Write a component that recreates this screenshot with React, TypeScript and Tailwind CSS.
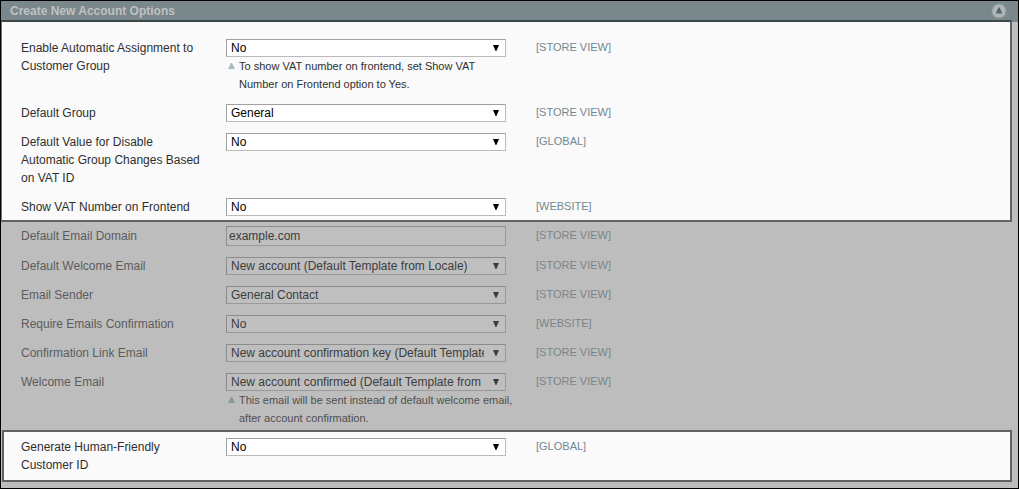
import React, { useState } from "react";

type Field = {
  id: string;
  label: string;
  value: string;
  options?: string[];
  note?: string;
  scope: "STORE VIEW" | "GLOBAL" | "WEBSITE";
};

const yesNo = ["No", "Yes"];

const vatFields: Field[] = [
  {
    id: "auto-assignment",
    label: "Enable Automatic Assignment to Customer Group",
    value: "No",
    options: yesNo,
    note: "To show VAT number on frontend, set Show VAT Number on Frontend option to Yes.",
    scope: "STORE VIEW",
  },
  { id: "default-group", label: "Default Group", value: "General", options: ["General", "Wholesale"], scope: "STORE VIEW" },
  {
    id: "disable-group-change",
    label: "Default Value for Disable Automatic Group Changes Based on VAT ID",
    value: "No",
    options: yesNo,
    scope: "GLOBAL",
  },
  { id: "show-vat", label: "Show VAT Number on Frontend", value: "No", options: yesNo, scope: "WEBSITE" },
];

const emailFields: Field[] = [
  { id: "email-domain", label: "Default Email Domain", value: "example.com", scope: "STORE VIEW" },
  {
    id: "welcome-template",
    label: "Default Welcome Email",
    value: "New account (Default Template from Locale)",
    options: ["New account (Default Template from Locale)"],
    scope: "STORE VIEW",
  },
  { id: "email-sender", label: "Email Sender", value: "General Contact", options: ["General Contact"], scope: "STORE VIEW" },
  { id: "require-confirmation", label: "Require Emails Confirmation", value: "No", options: yesNo, scope: "WEBSITE" },
  {
    id: "confirmation-link",
    label: "Confirmation Link Email",
    value: "New account confirmation key (Default Template from Locale)",
    options: ["New account confirmation key (Default Template from Locale)"],
    scope: "STORE VIEW",
  },
  {
    id: "welcome-email",
    label: "Welcome Email",
    value: "New account confirmed (Default Template from Locale)",
    options: ["New account confirmed (Default Template from Locale)"],
    note: "This email will be sent instead of default welcome email, after account confirmation.",
    scope: "STORE VIEW",
  },
];

const customerIdFields: Field[] = [
  { id: "human-friendly-id", label: "Generate Human-Friendly Customer ID", value: "No", options: yesNo, scope: "GLOBAL" },
];

function FieldRow({ field, dimmed = false }: { field: Field; dimmed?: boolean }) {
  const control = dimmed
    ? "border-t-[#8c8c8c] border-l-[#8c8c8c] border-r-[#999] border-b-[#999] bg-[#bfbfbf] text-[#3c3c3c]"
    : "border-t-[#a0a0a0] border-l-[#a0a0a0] border-r-[#bbb] border-b-[#bbb] bg-white text-black";
  return (
    <div className="grid grid-cols-[185px_280px_1fr] items-start gap-x-5">
      <label
        htmlFor={field.id}
        className={`text-[12px] leading-[18px] ${dimmed ? "text-[#5c5c5c]" : "text-[#2f2f2f]"}`}
      >
        {field.label}
      </label>
      <div>
        {field.options ? (
          <div className="relative flex">
            <select
              id={field.id}
              defaultValue={field.value}
              className={`h-[18px] w-full appearance-none rounded-none border pr-[21px] pl-1 text-[12px] leading-4 outline-none ${control}`}
            >
              {field.options.map((option) => (
                <option key={option}>{option}</option>
              ))}
            </select>
            <svg
              viewBox="0 0 6 6"
              aria-hidden="true"
              className={`pointer-events-none absolute top-1.5 right-[7px] size-1.5 ${dimmed ? "fill-[#3c3c3c]" : "fill-black"}`}
            >
              <path d="M0 0H6L3.4 6H2.6Z" />
            </svg>
          </div>
        ) : (
          <input
            id={field.id}
            type="text"
            defaultValue={field.value}
            className={`-mt-px block h-5 w-full rounded-none border px-0.5 text-[12px] leading-4 outline-none ${control}`}
          />
        )}
        {field.note && (
          <p className={`-mr-2 flex gap-1 pl-0.5 text-[11px] leading-[18px] ${dimmed ? "text-[#4f4f4f]" : "text-[#2f2f2f]"}`}>
            <svg
              viewBox="0 0 7 6"
              aria-hidden="true"
              className={`mt-1.5 h-1.5 w-[7px] shrink-0 ${dimmed ? "fill-[#87969b]" : "fill-[#a9bcc2]"}`}
            >
              <path d="M3 0H4L7 6H0Z" />
            </svg>
            <span>{field.note}</span>
          </p>
        )}
      </div>
      <span className={`pl-2.5 text-[11px] leading-4 ${dimmed ? "text-[#7b8588]" : "text-[#6f8992]"}`}>
        [{field.scope}]
      </span>
    </div>
  );
}

export default function App() {
  const [open, setOpen] = useState(true);
  return (
    <section className="border border-black bg-[#bdbdbd] font-['Liberation_Sans',Arial,sans-serif]">
      <header className="flex h-[21px] items-start justify-between bg-[#7a878b] pr-[11px] pl-[9px]">
        <h2 className="text-[12px] leading-5 font-bold text-[#bfc1c2]">Create New Account Options</h2>
        <button
          type="button"
          aria-label="Toggle section"
          aria-expanded={open}
          onClick={() => setOpen(!open)}
          className="pt-0.5"
        >
          <svg viewBox="0 0 16 16" className="block size-4" aria-hidden="true">
            <circle cx="8" cy="8" r="7.6" fill="#8d989b" />
            <circle cx="8" cy="8" r="6.6" fill="#b0b5b7" />
            <path d="M7.4 4.6H8.6L11.3 10.4H4.7Z" fill="#4d6873" />
          </svg>
        </button>
      </header>
      {open && (
        <>
          <div className="relative -mt-0.5 mr-1.5 flex flex-col gap-[11px] border-y-2 border-r-2 border-l border-t-[#3d484c] border-r-[#626364] border-b-[#626364] border-l-[#777] bg-[#fafafa] pt-[17px] pb-1 pl-[19px]">
            {vatFields.map((field) => (
              <FieldRow key={field.id} field={field} />
            ))}
          </div>
          <div className="flex flex-col gap-[11px] pt-[5px] pr-2 pb-[3px] pl-5">
            {emailFields.map((field) => (
              <FieldRow key={field.id} field={field} dimmed />
            ))}
          </div>
          <div className="mr-1.5 mb-1.5 ml-px flex flex-col gap-[11px] border-2 border-[#626262] bg-[#fafafa] py-1.5 pl-[17px]">
            {customerIdFields.map((field) => (
              <FieldRow key={field.id} field={field} />
            ))}
          </div>
        </>
      )}
    </section>
  );
}
